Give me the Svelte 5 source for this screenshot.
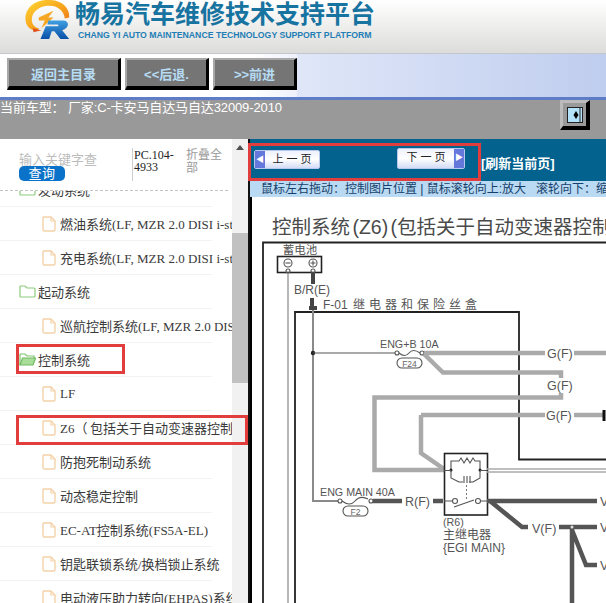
<script>
  const rows = [
    { kind: 'folder', text: '发动系统' },
    { kind: 'file', text: '燃油系统(LF, MZR 2.0 DISI i-stop)' },
    { kind: 'file', text: '充电系统(LF, MZR 2.0 DISI i-stop)' },
    { kind: 'folder', text: '起动系统' },
    { kind: 'file', text: '巡航控制系统(LF, MZR 2.0 DISI i-stop)' },
    { kind: 'open', text: '控制系统' },
    { kind: 'file', text: 'LF' },
    { kind: 'file', text: 'Z6（\u2009包括关于自动变速器控制）' },
    { kind: 'file', text: '防抱死制动系统' },
    { kind: 'file', text: '动态稳定控制' },
    { kind: 'file', text: 'EC-AT控制系统(FS5A-EL)' },
    { kind: 'file', text: '钥匙联锁系统/换档锁止系统' },
    { kind: 'file', text: '电动液压助力转向(EHPAS)系统' }
  ];
</script>

<div class="page">
  <header class="head">
    <svg class="logo" viewBox="16 0 53 41" width="46" height="40" preserveAspectRatio="none" aria-hidden="true">
      <defs>
        <linearGradient id="ring" x1="0" y1="0" x2="1" y2="1">
          <stop offset="0" stop-color="#fdd835" />
          <stop offset="0.55" stop-color="#f7a21b" />
          <stop offset="1" stop-color="#e8641a" />
        </linearGradient>
        <linearGradient id="rr" x1="0" y1="0" x2="0" y2="1">
          <stop offset="0" stop-color="#3fa0e0" />
          <stop offset="1" stop-color="#0b4fa8" />
        </linearGradient>
      </defs>
      <path d="M32 31 C22 32 16 25 18 15 C21 5 32 -1 47 0 C61 1 69 9 68 18 L63 19 C62 10 53 5 43 6 C32 7 25 13 25 20 C25 25 28 28 33 29 Z" fill="url(#ring)" />
      <path d="M26 29 L36 31 L27 33 Z" fill="#e0521b" />
      <path d="M33 18 L50 11 L44 18 L50 18 L36 29 L40 21 L33 21 Z" fill="#f5a623" />
      <path d="M44 21 L62 21 C69 22 68 29 60 31 L68 40 L58 40 L51 32 L48 32 L45 40 L35 40 L41 27 L52 27 C57 27 57 25 53 25 L43 25 Z" fill="url(#rr)" />
    </svg>
    <div class="brand">
      <div class="brand-cn">畅易汽车维修技术支持平台</div>
      <div class="brand-en">CHANG YI AUTO MAINTENANCE TECHNOLOGY SUPPORT PLATFORM</div>
    </div>
  </header>

  <nav class="bar">
    <div class="tools">
      <button class="tool wide">返回主目录</button>
      <button class="tool">&lt;&lt;后退.</button>
      <button class="tool">&gt;&gt;前进</button>
    </div>
  </nav>

  <div class="model">
    <div class="model-text">当前车型： 厂家:C-卡安马自达马自达32009-2010</div>
    <button class="toggle" aria-label="切换">
      <svg viewBox="0 0 16 16" width="16" height="16" aria-hidden="true">
        <rect x="0.5" y="0.5" width="15" height="15" fill="#b5e2fb" stroke="#222" />
        <path d="M13 0.5V15.5" stroke="#222" />
        <path d="M9 4 L11.5 8 L9 12 L6.5 8 Z" fill="#000" />
      </svg>
    </button>
  </div>

  <div class="body">
    <aside class="side">
      <div class="tree">
        <div class="search">
          <div class="query">
            <div class="hint">输入关键字查</div>
            <div class="go">查询</div>
          </div>
          <div class="code">PC.104-4933</div>
          <div class="fold">折叠全部</div>
        </div>
        <ul class="list">
          {#each rows as row}
            <li class="row" class:child={row.kind === 'file'}>
              {#if row.kind === 'file'}
                <svg class="ico" viewBox="0 0 14 16" width="14" height="16" aria-hidden="true">
                  <path d="M1.5 1 H9 L13 5 V13.5 Q13 15 11.5 15 H2.5 Q1 15 1 13.5 V1.5 Z" fill="#fff" stroke="#f4d2a8" stroke-width="1.4" />
                  <path d="M9 1 V5 H13" fill="none" stroke="#f4d2a8" stroke-width="1.2" />
                </svg>
              {:else if row.kind === 'open'}
                <svg class="ico" viewBox="0 0 17 13" width="17" height="13" aria-hidden="true">
                  <path d="M1 12 V2 Q1 1 2 1 H6 L8 3 H15 V5" fill="#fff" stroke="#7fc56f" stroke-width="1.2" />
                  <path d="M1 12 L3.5 5 H16.5 L14 12 Z" fill="#a9dd9a" stroke="#6fbb5e" stroke-width="1.2" />
                </svg>
              {:else}
                <svg class="ico" viewBox="0 0 17 13" width="17" height="13" aria-hidden="true">
                  <path d="M1 2 Q1 1 2 1 H6 L8 3 H15 Q16 3 16 4 V11 Q16 12 15 12 H2 Q1 12 1 11 Z" fill="#fff" stroke="#8ccb7c" stroke-width="1.2" />
                </svg>
              {/if}
              <span class="label">{row.text}</span>
            </li>
          {/each}
        </ul>
      </div>
      <div class="scroll">
        <div class="up"></div>
        <div class="thumb"></div>
      </div>
    </aside>

    <main class="main">
      <div class="pager">
        <button class="page-btn prev">
          <span class="arrow">◀</span><span class="page-text">上 一 页</span>
        </button>
        <button class="page-btn next">
          <span class="page-text">下 一 页</span><span class="arrow">▶</span>
        </button>
        <span class="refresh">[刷新当前页]</span>
      </div>
      <div class="tip">鼠标左右拖动：控制图片位置 | 鼠标滚轮向上:放大&nbsp;&nbsp;&nbsp;滚轮向下：缩小</div>
      <div class="sheet">
        <svg class="diagram" viewBox="250 197 356 406" width="356" height="406" role="img" aria-label="控制系统电路图">
          <path d="M251 197 V603" stroke="#000" stroke-width="2" />
          <text class="title" x="272" y="234">控制系统 (Z6) (包括关于自动变速器控制)</text>

          <path d="M263 603 V242.500 H606" class="frame" />

          <text class="tiny" x="300" y="254" text-anchor="middle">蓄电池</text>
          <rect x="277.500" y="256.500" width="44" height="16" class="box" />
          <circle cx="288" cy="263" r="4" class="thin" /><path d="M285.500 263H290.500" class="thin" />
          <circle cx="313" cy="263" r="4" class="thin" /><path d="M310.500 263H315.500M313 260.500V265.500" class="thin" />
          <circle cx="288" cy="271" r="2" class="thin" /><circle cx="313" cy="271" r="2" class="thin" />

          <path d="M288 273 V603" class="lg" />
          <path d="M313 273 V284" class="dk" />
          <text class="lab3" x="294" y="294">B/R(E)</text>
          <path d="M312 298 V308 M309 308 H317" class="dk" />
          <text class="lab3" x="323" y="309">F-01 <tspan class="wide-cn" dx="2">继电器和保险丝盒</tspan></text>

          <path d="M295 603 V312 H519 V459.500 H606" class="frame" />
          <path d="M313 310 V501 H338" class="lg2" />

          <circle cx="313" cy="353" r="2.200" fill="#222" />
          <path d="M313 353 H395" class="thin" />
          <text class="lab" x="380" y="348">ENG+B 10A</text>
          <circle cx="397" cy="353" r="2" class="thin" />
          <path d="M399 353 Q405 358 409 353 T420 353" class="thin" />
          <circle cx="422" cy="353" r="2" class="thin" />
          <rect x="397" y="358" width="25" height="10" rx="5" class="thin" />
          <text class="mini" x="409.500" y="366.500" text-anchor="middle">F24</text>

          <path d="M424 353 H545 M574 353 H606 M424 354 L443 372.500 H561 V378 M561 393 V397.500 H374.500 V470 H444 M421 415 V453 L444 469 M421 415 H545 M574 415 H604" class="gw" />
          <path d="M604 410 V421" stroke="#111" stroke-width="3" />
          <text class="lab2" x="547" y="358">G(F)</text>
          <text class="lab2" x="547" y="390">G(F)</text>
          <text class="lab2" x="546" y="420">G(F)</text>

          <rect x="444.500" y="453.500" width="43" height="61.500" class="box" />
          <path d="M451 469 V461 H459 L461 458 L464 463 L467 458 L470 463 L473 458 L475 461 H480 V469 M451 471 V478 L459 482 M480 471 V478 L473 482" class="thin" />
          <path d="M459 482 H463 M464 476 V483 M467 476 V483 M470 476 V483 M469 482 H473" class="thin" />
          <circle cx="451" cy="470" r="1.500" fill="#222" /><circle cx="480" cy="470" r="1.500" fill="#222" />
          <path d="M466.500 485 V500" stroke="#777" stroke-dasharray="2 2" />
          <path d="M487 469 H606 M487 472 H606" stroke="#aaa" stroke-width="1.500" fill="none" />
          <path d="M444 470.500 H451 M480 470.500 H487" class="thin" />
          <circle cx="455" cy="501" r="2.500" class="thin" /><circle cx="478" cy="501" r="2.500" class="thin" />
          <path d="M454 507 L474 500 M444 501 H452 M481 501 H487" class="thin" />

          <text class="lab" x="320" y="496">ENG MAIN 40A</text>
          <circle cx="340" cy="501" r="2" class="thin" />
          <path d="M342 501 Q350 507 355 501 T368 499" class="thin" />
          <circle cx="371" cy="501" r="2" class="thin" />
          <rect x="343" y="506" width="25" height="10" rx="5" class="thin" />
          <text class="mini" x="355.500" y="514.500" text-anchor="middle">F2</text>

          <path d="M373 501 H402 M433 501 H443 M487 501 H597 M490 501 L522 527 H528 M559 527 H597 M572 527 V603 M572 530 L586 565 H597" class="dw" />
          <text class="lab2" x="405" y="506">R(F)</text>
          <text class="lab2" x="532" y="533">V(F)</text>
          <text class="lab2" x="600" y="506">V</text>
          <text class="lab2" x="600" y="532">V</text>
          <text class="lab2" x="600" y="570">V</text>
          <circle cx="572" cy="527" r="1.500" fill="#ddd" />

          <text class="lab" x="443" y="526">(R6)</text>
          <text class="lab3" x="443" y="539">主继电器</text>
          <text class="lab3" x="443" y="552">{'{'}EGI MAIN{'}'}</text>
        </svg>
      </div>
    </main>
  </div>

  <div class="mark mark-pager"></div>
  <div class="mark mark-parent"></div>
  <div class="mark mark-child"></div>
</div>

<style>
  :global(body) {
    margin: 0;
    overflow: hidden;
  }
  .page {
    position: relative;
    width: 606px;
    height: 603px;
    overflow: hidden;
    font-family: "Liberation Sans", "Noto Sans CJK SC", sans-serif;
    background: #fff;
  }
  .head {
    height: 54px;
    display: flex;
    align-items: flex-start;
    gap: 5px;
    padding-left: 24px;
    box-sizing: border-box;
    background: linear-gradient(#ffffff, #dcdcda);
    border-bottom: 1px solid #c3c6cc;
  }
  .logo {
    flex: none;
  }
  .brand {
    width: 320px;
  }
  .brand-cn {
    margin-top: -1px;
    font-size: 25px;
    line-height: 31px;
    font-weight: 700;
    color: #17739f;
    white-space: nowrap;
  }
  .brand-en {
    margin-left: 3px;
    font-size: 8.700px;
    line-height: 10px;
    font-weight: 700;
    color: #1f7eb5;
    white-space: nowrap;
  }
  .bar {
    height: 43px;
    background: linear-gradient(90deg, #e7ecf9, #dfe6f8 50%, #bfcdee);
  }
  .tools {
    width: 297px;
    height: 43px;
    box-sizing: border-box;
    padding: 4px 0 0 7px;
    display: flex;
    gap: 4px;
    background: linear-gradient(90deg, #fff 85%, #eef1fb);
  }
  .tool {
    width: 84px;
    height: 32px;
    padding: 0;
    box-sizing: border-box;
    border-style: solid;
    border-width: 2px 3px 4px 2px;
    border-color: #a8a8a8 #000 #000 #a8a8a8;
    background: #757575;
    color: #b6dcf4;
    font: 700 13px "Liberation Sans", "Noto Sans CJK SC", sans-serif;
  }
  .tool.wide {
    width: 114px;
  }
  .model {
    height: 42px;
    box-sizing: border-box;
    display: flex;
    justify-content: space-between;
    align-items: flex-start;
    padding-right: 16px;
    background: #999;
    border-top: 3px solid #5f7cc6;
  }
  .model-text {
    color: #fff;
    font-size: 13px;
    line-height: 15px;
    letter-spacing: -0.120px;
    white-space: nowrap;
  }
  .toggle {
    width: 30px;
    height: 30px;
    padding: 0;
    box-sizing: border-box;
    display: flex;
    align-items: center;
    justify-content: center;
    border-style: solid;
    border-width: 3px 4px 4px 3px;
    border-color: #bbb #000 #000 #bbb;
    background: #9a9a9a;
  }
  .body {
    display: flex;
    height: 464px;
  }
  .side {
    width: 248px;
    flex: none;
    display: flex;
    background: #fff;
    border-right: 2px solid #111;
    box-sizing: content-box;
  }
  .tree {
    width: 232px;
    flex: none;
    overflow: hidden;
    font-family: "Liberation Serif", "Noto Sans CJK SC", serif;
  }
  .search {
    height: 52px;
    position: relative;
    z-index: 1;
    display: flex;
    padding: 9px 0 0 19px;
    box-sizing: border-box;
    border-bottom: 1px dashed #c4c4c4;
    width: 228px;
    background: #fff;
  }
  .query {
    width: 113px;
    flex: none;
    padding-top: 4px;
    font-family: "Liberation Sans", "Noto Sans CJK SC", sans-serif;
  }
  .hint {
    font-size: 13px;
    line-height: 15px;
    color: #bcbcbc;
    white-space: nowrap;
  }
  .go {
    width: 46px;
    height: 15px;
    margin-top: -1px;
    border-radius: 5px;
    background: #0a72c8;
    color: #fff;
    font-size: 13px;
    line-height: 15px;
    text-align: center;
    letter-spacing: 0.500px;
  }
  .code {
    width: 54px;
    height: 33px;
    flex: none;
    padding-left: 1px;
    box-sizing: border-box;
    border-left: 1px solid #cfcfcf;
    padding-top: 1px;
    font-size: 12px;
    line-height: 12px;
    color: #222;
    overflow-wrap: anywhere;
  }
  .fold {
    width: 36px;
    margin-top: 1px;
    font-size: 12px;
    line-height: 13px;
    color: #9a9a9a;
    font-family: "Liberation Sans", "Noto Sans CJK SC", sans-serif;
  }
  .list {
    list-style: none;
    margin: -18px 0 0;
    padding: 0;
  }
  .row {
    height: 34px;
    width: 212px;
    box-sizing: border-box;
    display: flex;
    align-items: center;
    gap: 2px;
    padding-left: 19px;
    border-bottom: 1px solid #f2f2f2;
    white-space: nowrap;
    font-size: 13px;
    color: #3a3a3a;
  }
  .row.child {
    padding-left: 42px;
    gap: 4px;
  }
  .ico {
    flex: none;
  }
  .label {
    flex: none;
  }
  .scroll {
    width: 16px;
    flex: none;
    background: #f1f1f1;
    display: flex;
    flex-direction: column;
  }
  .up {
    width: 0;
    height: 0;
    margin: 6px auto 0;
    border-left: 4px solid transparent;
    border-right: 4px solid transparent;
    border-bottom: 5px solid #505050;
  }
  .thumb {
    height: 150px;
    margin-top: 83px;
    background: #c1c1c1;
  }
  .main {
    flex: 1;
    min-width: 0;
    overflow: hidden;
    display: flex;
    flex-direction: column;
  }
  .pager {
    height: 42px;
    flex: none;
    background: #04628f;
    box-sizing: border-box;
    padding: 11px 0 0 4px;
    display: flex;
    align-items: flex-start;
  }
  .page-btn {
    display: flex;
    align-items: stretch;
    height: 19px;
    width: 66px;
    padding: 0;
    border: 1px solid #b9c8ef;
    border-radius: 2px;
    background: linear-gradient(#eef1fd, #ffffff 50%, #d4dcf6);
    color: #222;
    font: 11px "Liberation Sans", "Noto Sans CJK SC", sans-serif;
  }
  .next {
    margin: -2px 0 0 77px;
    height: 21px;
    width: 68px;
  }
  .arrow {
    width: 10px;
    flex: none;
    background: #6478dc;
    color: #fff;
    font-size: 8px;
    line-height: 17px;
    text-align: center;
  }
  .page-text {
    flex: 1;
    line-height: 17px;
    text-align: center;
  }
  .refresh {
    margin: 6px 0 0 16px;
    color: #fff;
    font-size: 13px;
    line-height: 15px;
    font-weight: 700;
    white-space: nowrap;
  }
  .tip {
    height: 16px;
    flex: none;
    box-sizing: border-box;
    padding-left: 11px;
    background: #b9daf2;
    color: #15406b;
    font-size: 12px;
    line-height: 16px;
    white-space: nowrap;
  }
  .sheet {
    flex: 1;
    background: #fff;
    overflow: hidden;
  }
  .diagram {
    display: block;
    font-family: "Liberation Sans", "Noto Sans CJK SC", sans-serif;
  }
  .title {
    font-size: 19.500px;
    word-spacing: -3px;
    fill: #4a4a4a;
  }
  .frame {
    fill: none;
    stroke: #222;
    stroke-width: 1.800;
  }
  .box {
    fill: none;
    stroke: #222;
    stroke-width: 1.600;
  }
  .thin {
    fill: none;
    stroke: #555;
    stroke-width: 1.100;
  }
  .lg {
    fill: none;
    stroke: #9a9a9a;
    stroke-width: 1.400;
  }
  .lg2 {
    fill: none;
    stroke: #8a8a8a;
    stroke-width: 2;
  }
  .dk {
    fill: none;
    stroke: #444;
    stroke-width: 4;
  }
  .gw {
    fill: none;
    stroke: #aaa;
    stroke-width: 4.500;
  }
  .dw {
    fill: none;
    stroke: #555;
    stroke-width: 4.500;
  }
  .lab {
    font-size: 10.700px;
    fill: #555;
  }
  .lab2 {
    font-size: 12.500px;
    fill: #555;
  }
  .lab3 {
    font-size: 12px;
    fill: #555;
  }
  .wide-cn {
    letter-spacing: 4px;
  }
  .tiny {
    font-size: 11.500px;
    fill: #555;
  }
  .mini {
    font-size: 8.500px;
    fill: #666;
  }
  .mark {
    position: absolute;
    box-sizing: border-box;
    border: 3px solid #e23d3d;
    pointer-events: none;
  }
  .mark-pager {
    left: 248px;
    top: 143px;
    width: 233px;
    height: 38px;
  }
  .mark-parent {
    left: 16px;
    top: 344px;
    width: 109px;
    height: 30px;
  }
  .mark-child {
    left: 16px;
    top: 415px;
    width: 232px;
    height: 30px;
  }
</style>
